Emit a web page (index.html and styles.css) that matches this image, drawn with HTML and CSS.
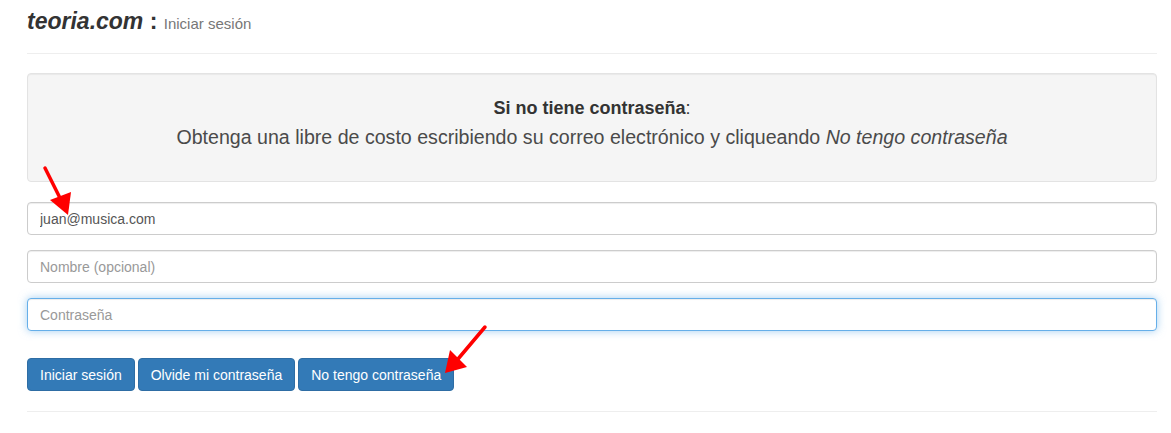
FILE: index.html
```html
<!DOCTYPE html>
<html lang="es">
<head>
    <meta charset="UTF-8">
    <title>teoria.com : Iniciar sesión</title>
    <link rel="stylesheet" href="styles.css">
</head>
<body>
    <div class="container">
        <div class="page-header">
            <h1>teoria.com <span class="sep">:</span> <small>Iniciar sesión</small></h1>
        </div>

        <!-- Aviso para usuarios sin contraseña -->
        <div class="well">
            <p class="well-title"><strong>Si no tiene contraseña</strong>:</p>
            <p class="lead">Obtenga una libre de costo escribiendo su correo electrónico y cliqueando <em>No tengo contraseña</em></p>
        </div>

        <form class="login-form">
            <div class="form-group">
                <input class="form-control" type="email" value="juan@musica.com">
            </div>
            <div class="form-group">
                <input class="form-control" type="text" placeholder="Nombre (opcional)">
            </div>
            <div class="form-group">
                <input class="form-control focused" type="password" placeholder="Contraseña">
            </div>
            <div class="buttons">
                <button type="button" class="btn">Iniciar sesión</button>
                <button type="button" class="btn">Olvide mi contraseña</button>
                <button type="button" class="btn">No tengo contraseña</button>
            </div>
        </form>

        <hr>

        <!-- Flechas de anotación -->
        <svg class="arrows" width="1171" height="433" viewBox="0 0 1171 433">
            <g stroke="#f00" stroke-width="3.5" stroke-linecap="round" fill="#f00">
                <line x1="45" y1="160" x2="60" y2="190" />
                <polygon points="68,207 50,192 71,184" stroke="none" />
                <line x1="485" y1="319" x2="458" y2="351" />
                <polygon points="445,365 450,342 467,359" stroke="none" />
            </g>
        </svg>
    </div>
</body>
</html>
```

FILE: styles.css
```css
body {
    margin: 0;
    font-family: 'Liberation Sans', Arial, sans-serif;
    font-size: 14px;
    color: #333;
    background: #fff;
}
.container {
    position: relative;
    padding: 0 14px 0 27px;
}
.page-header {
    border-bottom: 1px solid #eee;
    padding-bottom: 16px;
    margin-bottom: 19px;
}
.page-header h1 {
    margin: 8px 0 0;
    font-size: 23px;
    line-height: 26px;
    font-weight: bold;
    font-style: italic;
    color: #333;
}
.page-header .sep {
    font-style: normal;
}
.page-header small {
    font-size: 15px;
    font-weight: normal;
    font-style: normal;
    color: #777;
}

/* Well */
.well {
    background: #f5f5f5;
    border: 1px solid #e3e3e3;
    border-radius: 4px;
    box-shadow: inset 0 1px 1px rgba(0, 0, 0, 0.05);
    padding: 22px 19px 27px;
    margin-bottom: 20px;
    text-align: center;
}
.well p {
    margin: 0;
}
.well-title {
    font-size: 18px;
    line-height: 24px;
}
.lead {
    font-size: 19.6px;
    line-height: 34px;
    color: #4a4a4a;
}

/* Form */
.form-group {
    margin-bottom: 15px;
}
.form-control {
    display: block;
    box-sizing: border-box;
    width: 100%;
    height: 33px;
    padding: 6px 12px;
    font-family: inherit;
    font-size: 14px;
    color: #555;
    background: #fff;
    border: 1px solid #ccc;
    border-radius: 4px;
    box-shadow: inset 0 1px 1px rgba(0, 0, 0, 0.075);
    outline: none;
}
.form-control::placeholder {
    color: #999;
}
.form-control.focused {
    border-color: #66afe9;
    box-shadow: inset 0 1px 1px rgba(0, 0, 0, 0.075), 0 0 8px rgba(102, 175, 233, 0.6);
}
.buttons {
    display: flex;
    gap: 3px;
    margin-top: 27px;
}
.btn {
    height: 33px;
    padding: 0 12px;
    font-family: inherit;
    font-size: 14px;
    color: #fff;
    background: #337ab7;
    border: 1px solid #2e6da4;
    border-radius: 4px;
    cursor: pointer;
}
hr {
    margin: 20px 0 0;
    border: 0;
    border-top: 1px solid #eee;
}
.arrows {
    position: absolute;
    top: 0;
    left: 0;
    pointer-events: none;
}
```
